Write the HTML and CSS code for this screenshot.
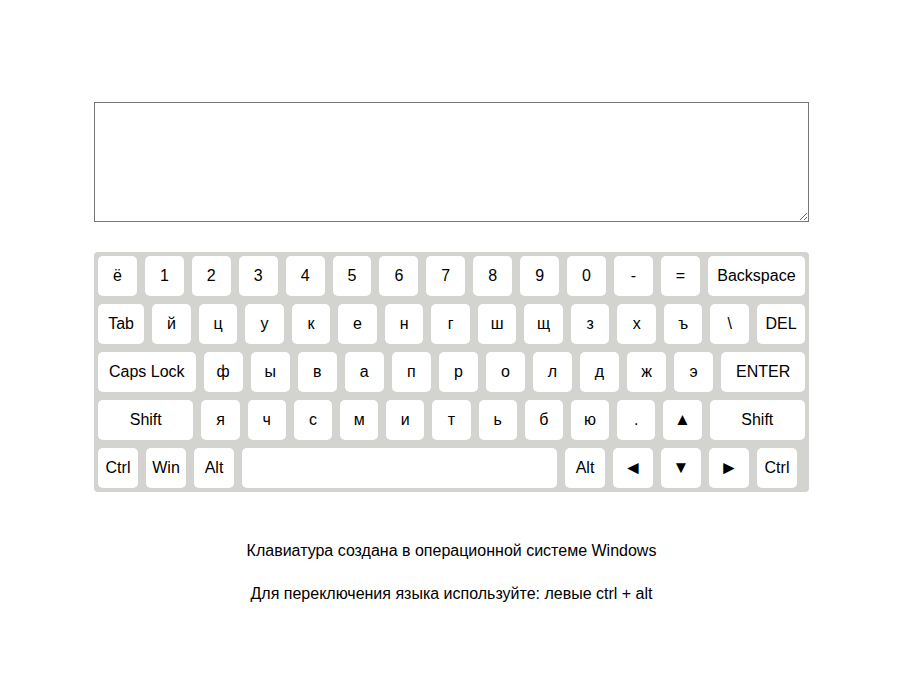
FILE: index.html
```html
<!DOCTYPE html>
<html lang="ru">
<head>
<meta charset="utf-8">
<title>Клавиатура</title>
<link rel="stylesheet" href="styles.css">
</head>
<body>
<div class="page">
  <textarea class="input"></textarea>
  <div class="keyboard">
    <div class="row">
      <div class="key">ё</div><div class="key">1</div><div class="key">2</div><div class="key">3</div><div class="key">4</div><div class="key">5</div><div class="key">6</div><div class="key">7</div><div class="key">8</div><div class="key">9</div><div class="key">0</div><div class="key">-</div><div class="key">=</div><div class="key key-back">Backspace</div>
    </div>
    <div class="row">
      <div class="key key-tab">Tab</div><div class="key">й</div><div class="key">ц</div><div class="key">у</div><div class="key">к</div><div class="key">е</div><div class="key">н</div><div class="key">г</div><div class="key">ш</div><div class="key">щ</div><div class="key">з</div><div class="key">х</div><div class="key">ъ</div><div class="key">\</div><div class="key key-del">DEL</div>
    </div>
    <div class="row">
      <div class="key key-caps">Caps Lock</div><div class="key">ф</div><div class="key">ы</div><div class="key">в</div><div class="key">а</div><div class="key">п</div><div class="key">р</div><div class="key">о</div><div class="key">л</div><div class="key">д</div><div class="key">ж</div><div class="key">э</div><div class="key key-enter">ENTER</div>
    </div>
    <div class="row">
      <div class="key key-shift">Shift</div><div class="key">я</div><div class="key">ч</div><div class="key">с</div><div class="key">м</div><div class="key">и</div><div class="key">т</div><div class="key">ь</div><div class="key">б</div><div class="key">ю</div><div class="key">.</div><div class="key key-vert">▲</div><div class="key key-shift">Shift</div>
    </div>
    <div class="row">
      <div class="key">Ctrl</div><div class="key">Win</div><div class="key">Alt</div><div class="key key-space"></div><div class="key">Alt</div><div class="key key-side">◄</div><div class="key key-vert">▼</div><div class="key key-side">►</div><div class="key">Ctrl</div>
    </div>
  </div>
  <p class="note note-first">Клавиатура создана в операционной системе Windows</p>
  <p class="note">Для переключения языка используйте: левые ctrl + alt</p>
</div>
</body>
</html>
```

FILE: styles.css
```css
html, body {
  margin: 0;
  padding: 0;
  background: #ffffff;
}

body {
  font-family: "Liberation Sans", Arial, sans-serif;
  color: #000000;
}

.page {
  width: 715px;
  margin-left: 94px;
  padding-top: 102px;
}

.input {
  display: block;
  box-sizing: border-box;
  width: 715px;
  height: 120px;
  margin: 0;
  padding: 2px;
  border: 1px solid #767676;
  border-radius: 0;
  background: #ffffff;
}

.keyboard {
  margin-top: 30px;
  box-sizing: border-box;
  width: 715px;
  padding: 4px;
  background: #d3d4d0;
  border-radius: 4px;
  display: flex;
  flex-direction: column;
  gap: 8px;
}

.row {
  display: flex;
  gap: 8px;
}

.key {
  flex: 0 1 40px;
  height: 40px;
  box-sizing: border-box;
  background: #ffffff;
  border-radius: 5px;
  display: flex;
  align-items: center;
  justify-content: center;
  font-size: 16px;
  color: #000000;
  white-space: nowrap;
  overflow: hidden;
}

.key-back { flex-basis: 100px; }
.key-tab { flex-basis: 48px; }
.key-del { flex-basis: 50px; }
.key-caps { flex-basis: 100px; }
.key-enter { flex-basis: 86px; }
.key-shift { flex-basis: 100px; }
.key-space { flex: 0 0 315px; }
.key-side { font-size: 19px; }
.key-vert { font-size: 17px; }

.note {
  margin: 0;
  text-align: center;
  font-size: 16px;
  line-height: 18px;
  margin-top: 25px;
}

.note-first {
  margin-top: 50px;
}
```
